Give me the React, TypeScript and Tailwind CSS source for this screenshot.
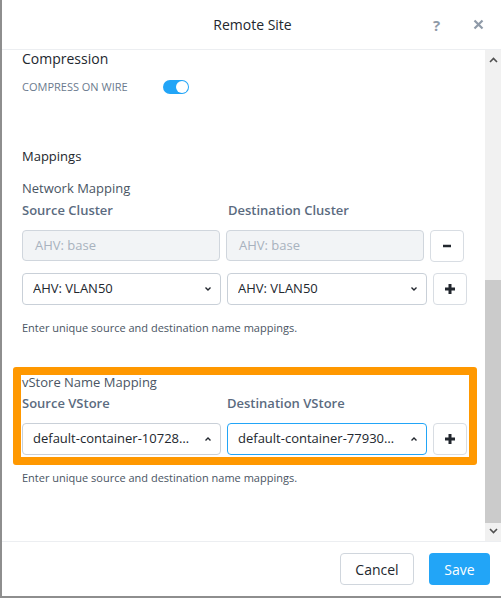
const font = { fontFamily: "'Open Sans', Lato, sans-serif" };

function Chevron({ up = false }: { up?: boolean }) {
  return (
    <svg width="8" height="6" viewBox="0 0 8 6" className="text-[#22272e]">
      <path d={up ? "M1.5 4.5 L4 2 L6.5 4.5" : "M1.5 1.5 L4 4 L6.5 1.5"} fill="none" stroke="currentColor" strokeWidth="1.4" />
    </svg>
  );
}

function Select({ value, up = false, focused = false, w = "w-[199px]" }: { value: string; up?: boolean; focused?: boolean; w?: string }) {
  return (
    <div
      className={`${w} h-[32px] rounded-[4px] border ${focused ? "border-[#22a5f7]" : "border-[#c9d0d8]"} bg-white flex items-center pl-[10px] pr-[8px] justify-between`}
    >
      <span className="text-[13px] text-[#22272e] truncate">{value}</span>
      <Chevron up={up} />
    </div>
  );
}

function IconBtn({ kind }: { kind: "plus" | "minus" }) {
  return (
    <div className="w-[34px] h-[32px] rounded-[4px] border border-[#d8dde3] bg-white flex items-center justify-center">
      <svg width="12" height="12" viewBox="0 0 12 12">
        {kind === "plus" ? (
          <path d="M6 1 V11 M1 6 H11" stroke="#22272e" strokeWidth="3" />
        ) : (
          <path d="M2 6 H10" stroke="#22272e" strokeWidth="2.5" />
        )}
      </svg>
    </div>
  );
}

export default function App() {
  return (
    <div style={font} className="relative w-[501px] h-[598px] bg-white border-l-2 border-b-2 border-[#8e8e8e] flex flex-col overflow-hidden">
      {/* header */}
      <div className="h-[50px] shrink-0 border-b border-[#eceef1] flex items-center relative">
        <div className="w-full text-center text-[14px] text-[#22272e] pl-[2px]">Remote Site</div>
        <span className="absolute left-[431px] top-[14px] text-[15px] font-bold text-[#8f9aa8]">?</span>
        <svg className="absolute left-[471px] top-[19px]" width="11" height="11" viewBox="0 0 11 11">
          <path d="M1.5 1.5 L9.5 9.5 M9.5 1.5 L1.5 9.5" stroke="#8f9aa8" strokeWidth="2.2" />
        </svg>
      </div>

      {/* body */}
      <div className="flex h-[491px] shrink-0">
        <div className="flex-1 pl-[20px] pt-[1px] flex flex-col">
          <div className="text-[14px] leading-[15px] text-[#22272e]">Compression</div>
          <div className="flex items-center mt-[14px] h-[14px]">
            <span className="text-[11px] text-[#6b7a8e] w-[141px]">COMPRESS ON WIRE</span>
            <div className="w-[26px] h-[14px] rounded-full bg-[#22a5f7] relative">
              <div className="absolute right-[1px] top-[1px] w-[12px] h-[12px] rounded-full bg-white" />
            </div>
          </div>

          <div className="text-[13px] leading-[16px] text-[#22272e] mt-[54px]">Mappings</div>
          <div className="text-[13px] leading-[16px] text-[#4a5563] mt-[16px]">Network Mapping</div>
          <div className="flex mt-[6px] text-[13px] leading-[16px] font-semibold text-[#5b6b80]">
            <span className="w-[206px]">Source Cluster</span>
            <span>Destination Cluster</span>
          </div>

          <div className="flex mt-[12px] gap-[6px]">
            <div className="w-[198px] h-[31px] rounded-[4px] border border-[#d0d6dd] bg-[#f2f4f6] flex items-center pl-[12px] text-[13px] text-[#a8b2be]">AHV: base</div>
            <div className="w-[198px] h-[31px] rounded-[4px] border border-[#d0d6dd] bg-[#f2f4f6] flex items-center pl-[12px] text-[13px] text-[#a8b2be]">AHV: base</div>
            <IconBtn kind="minus" />
          </div>
          <div className="flex mt-[11px] gap-[6px]">
            <Select value="AHV: VLAN50" />
            <Select value="AHV: VLAN50" w="w-[200px]" />
            <IconBtn kind="plus" />
          </div>
          <div className="text-[11px] leading-[14px] text-[#4a5563] mt-[16px]">Enter unique source and destination name mappings.</div>

          <div className="text-[13px] leading-[16px] text-[#4a5563] mt-[39px]">vStore Name Mapping</div>
          <div className="flex mt-[5px] text-[13px] leading-[16px] font-semibold text-[#5b6b80]">
            <span className="w-[205px]">Source VStore</span>
            <span>Destination VStore</span>
          </div>
          <div className="flex mt-[12px] gap-[6px]">
            <Select value="default-container-10728…" up />
            <Select value="default-container-77930…" up focused w="w-[200px]" />
            <IconBtn kind="plus" />
          </div>
          <div className="text-[11px] leading-[14px] text-[#4a5563] mt-[16px]">Enter unique source and destination name mappings.</div>
        </div>

        {/* scrollbar */}
        <div className="w-[16px] bg-[#f1f1f1] flex flex-col items-center">
          <div className="h-[16px] flex items-center justify-center mt-[2px]">
            <svg width="9" height="6" viewBox="0 0 9 6"><path d="M1 5 L4.5 1.5 L8 5" fill="none" stroke="#505050" strokeWidth="1.6" /></svg>
          </div>
          <div className="w-full bg-[#cbcbcb] h-[243px] mt-[212px]" />
          <div className="h-[16px] flex items-center justify-center">
            <svg width="9" height="6" viewBox="0 0 9 6"><path d="M1 1 L4.5 4.5 L8 1" fill="none" stroke="#505050" strokeWidth="1.6" /></svg>
          </div>
        </div>
      </div>

      {/* footer */}
      <div className="flex-1 border-t border-[#eceef1] flex items-start justify-end pt-[11px] pr-[11px] gap-[15px]">
        <div className="w-[74px] h-[32px] rounded-[4px] border border-[#d0d6dd] bg-white flex items-center justify-center text-[14px] text-[#22272e]">Cancel</div>
        <div className="w-[61px] h-[32px] rounded-[4px] bg-[#22a5f7] flex items-center justify-center text-[14px] text-white">Save</div>
      </div>

      {/* annotation overlay */}
      <div className="absolute left-[11px] top-[367px] w-[464px] h-[98px] border-[8px] border-[#ff9800] rounded-[3px] pointer-events-none" />
    </div>
  );
}
